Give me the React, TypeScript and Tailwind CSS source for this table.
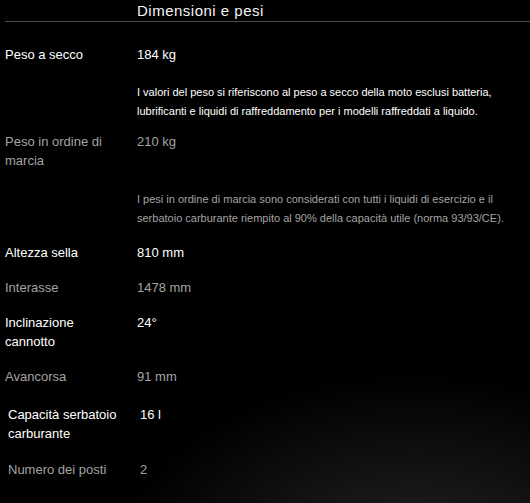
import React from "react";

type Row = { label: string; value: string; bright: boolean; note?: string; noteBright?: boolean; shift?: string };

const rows: Row[] = [
  {
    label: "Peso a secco",
    value: "184 kg",
    bright: true,
    note: "I valori del peso si riferiscono al peso a secco della moto esclusi batteria, lubrificanti e liquidi di raffreddamento per i modelli raffreddati a liquido.",
    noteBright: true,
  },
  {
    label: "Peso in ordine di marcia",
    value: "210 kg",
    bright: false,
    note: "I pesi in ordine di marcia sono considerati con tutti i liquidi di esercizio e il serbatoio carburante riempito al 90% della capacità utile (norma 93/93/CE).",
    noteBright: false,
  },
  { label: "Altezza sella", value: "810 mm", bright: true },
  { label: "Interasse", value: "1478 mm", bright: false },
  { label: "Inclinazione cannotto", value: "24°", bright: true },
  { label: "Avancorsa", value: "91 mm", bright: false },
  { label: "Capacità serbatoio carburante", value: "16 l", bright: true, shift: "pl-[3px] mt-[3px]" },
  { label: "Numero dei posti", value: "2", bright: false, shift: "pl-[3px] mt-[1px]" },
];

export default function App() {
  return (
    <div
      className="h-[503px] overflow-hidden bg-black bg-[radial-gradient(ellipse_300px_190px_at_78%_112%,#242424_0%,#141414_45%,#000_100%)] text-white"
      style={{ fontFamily: '"Liberation Sans", Arial, sans-serif' }}
    >
      <div className="pl-[5px]">
        <div className="border-b border-[#4a4a4a] pl-[132px] pt-[1px] h-[22px]">
          <h2 className="text-[15px] leading-[19px] tracking-[0.5px] text-[#f2f2f2] font-normal">Dimensioni e pesi</h2>
        </div>
        <div className="pt-[15px]">
          {rows.map((r) => (
            <div key={r.label} className={r.shift ?? ""}>
              <div
                className={`grid grid-cols-[132px_1fr] py-[8px] text-[13px] leading-[19px] ${r.bright ? "text-white" : "text-[#a3a3a3]"}`}
              >
                <div className="pr-[8px] w-[120px]">{r.label}</div>
                <div>{r.value}</div>
              </div>
              {r.note && (
                <div
                  className={`grid grid-cols-[132px_1fr] text-[11px] leading-[19px] ${r.noteBright ? "text-white pt-[11px] pb-[3px]" : "text-[#a3a3a3] pt-[12px] pb-[7px]"}`}
                >
                  <div />
                  <div className="pr-[6px]">{r.note}</div>
                </div>
              )}
            </div>
          ))}
        </div>
      </div>
    </div>
  );
}
